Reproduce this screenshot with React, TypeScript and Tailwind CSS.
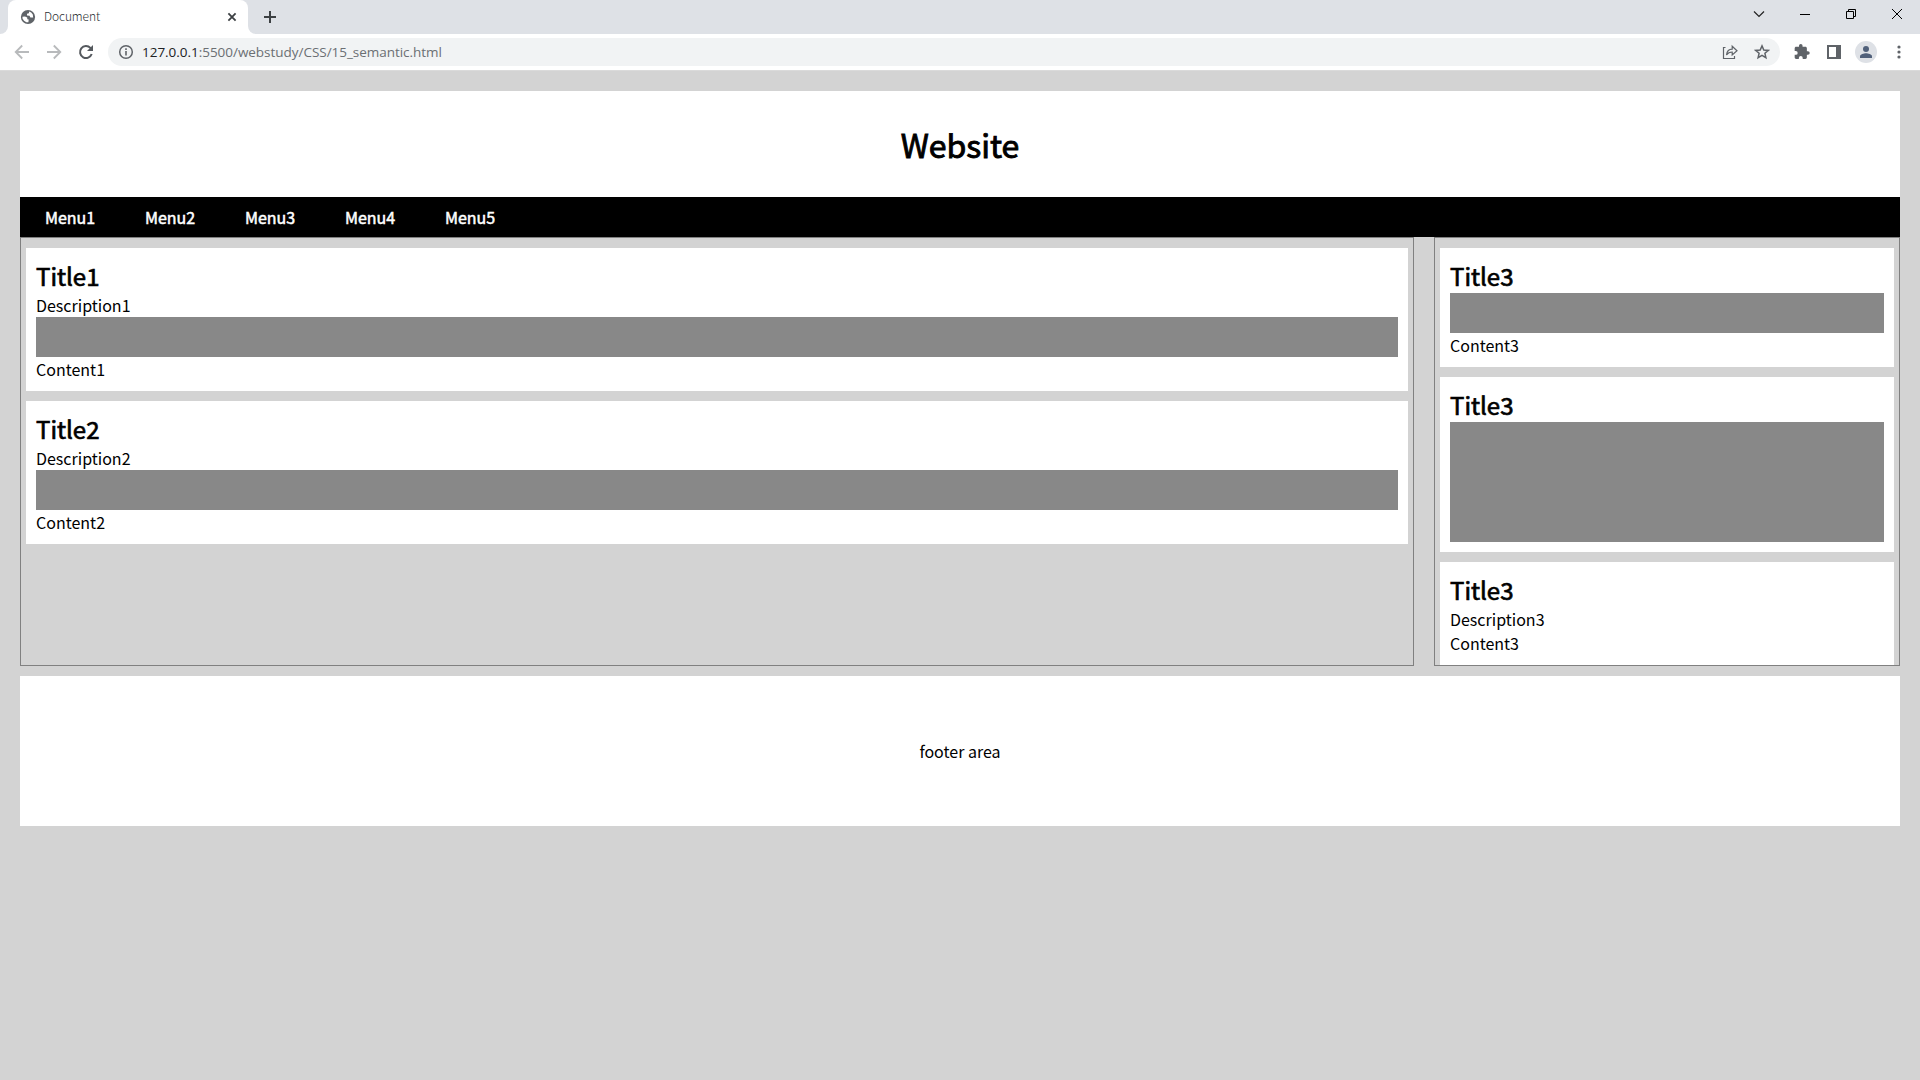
import type { ReactNode } from "react";

function TabStrip() {
  return (
    <div className="flex h-[34px] items-end justify-between bg-[#dee1e6]">
      <div className="flex h-full items-end">
        <div className="h-2 w-2 bg-white">
          <div className="h-2 w-2 rounded-br-lg bg-[#dee1e6]" />
        </div>
        <div className="flex h-full w-[240px] items-center rounded-t-lg bg-white pl-[12px] pr-[8px]">
          <svg width="16" height="16" viewBox="0 0 16 16" className="shrink-0">
            <circle cx="8" cy="8" r="7.1" fill="#5f6368" />
            <path d="M2.5 7.7 5 7.6 7.2 8.5 7.3 10.2 8.7 10.4 8.4 13.2 6.4 13.2 4 11.7 2.5 9.6Z" fill="#fff" />
            <path d="M9.1 2.6 8.9 4.2 7 4.8 7 6.4 9.5 6.8 10.4 8.4 12.2 8.6 13.2 8.4 12.8 5.4 11.2 3.5Z" fill="#fff" />
          </svg>
          <span className="mb-[2px] ml-[8px] flex-1 font-['Noto_Sans_CJK_KR',sans-serif] text-[12px] font-light tracking-[-0.1px] text-[#2c3034]">Document</span>
          <svg width="16" height="16" viewBox="0 0 16 16">
            <path d="m4.4 4.4 7.2 7.2M11.6 4.4l-7.2 7.2" stroke="#3c4043" strokeWidth="1.8" />
          </svg>
        </div>
        <div className="h-2 w-2 bg-white">
          <div className="h-2 w-2 rounded-bl-lg bg-[#dee1e6]" />
        </div>
        <svg width="12" height="12" viewBox="0 0 12 12" className="mb-[11px] ml-[8px]">
          <path d="M6 0v12M0 6h12" stroke="#3c4043" strokeWidth="2" />
        </svg>
      </div>
      <div className="flex h-[28px] w-[184px] items-center">
        <div className="flex w-[46px] justify-center">
          <svg width="12" height="12" viewBox="0 0 12 12" className="mb-[12px]"><path d="m1 3.5 5 5 5-5" fill="none" stroke="#222" strokeWidth="1.2" /></svg>
        </div>
        <div className="flex w-[46px] justify-center">
          <svg width="10" height="10" viewBox="0 0 10 10" className="mb-[12px]"><path d="M0 5.5h10" stroke="#000" /></svg>
        </div>
        <div className="flex w-[46px] justify-center">
          <svg width="10" height="10" viewBox="0 0 10 10" className="mb-[12px]"><path d="M.5 2.5h7v7h-7zM2.5 2.5v-2h7v7h-2" fill="none" stroke="#000" /></svg>
        </div>
        <div className="flex w-[46px] justify-center">
          <svg width="10" height="10" viewBox="0 0 10 10" className="mb-[12px]"><path d="m0 0 10 10M10 0 0 10" stroke="#000" /></svg>
        </div>
      </div>
    </div>
  );
}

function Toolbar() {
  return (
    <div className="flex h-[36px] items-center bg-white">
      <div className="flex w-[108px] items-center pl-[14px]">
        <svg width="16" height="16" viewBox="0 0 16 16"><path d="M15 8H2M8.2 1.5 1.7 8l6.5 6.5" fill="none" stroke="#b8babc" strokeWidth="1.8" /></svg>
        <svg width="16" height="16" viewBox="0 0 16 16" className="ml-[16px]"><path d="M1 8h13M7.8 1.5 14.3 8l-6.5 6.5" fill="none" stroke="#b8babc" strokeWidth="1.8" /></svg>
        <svg width="16" height="16" viewBox="0 0 16 16" className="ml-[16px]"><path d="M13.7 10A6 6 0 1 1 12.4 3.9L14 5.5" fill="none" stroke="#55595e" strokeWidth="2" /><path d="M15 1v6H9Z" fill="#55595e" /></svg>
      </div>
      <div className="flex h-[28px] w-[1672px] items-center rounded-full bg-[#f1f3f4] px-[10px]">
        <svg width="16" height="16" viewBox="0 0 16 16"><circle cx="8" cy="8" r="6.3" fill="none" stroke="#5f6368" strokeWidth="1.5" /><path d="M8 7v4.5M8 4.3V6" stroke="#5f6368" strokeWidth="1.6" /></svg>
        <span className="ml-[8px] flex-1 whitespace-pre font-['Open_Sans',sans-serif] text-[13.5px] tracking-[-0.03px] text-[#6b6f73]">
          <span className="text-[#202124]">127.0.0.1</span>:5500/webstudy/CSS/15_semantic.html
        </span>
        <svg width="16" height="16" viewBox="0 0 16 16"><path d="M3.500 3.500h-2v11h11V12" fill="none" stroke="#5f6368" strokeWidth="1.200" /><path d="M4.500 11C5 7 7 5.200 10.200 5.200V2.200L15 6.700l-4.800 4.200V8C7.500 8 5.800 9 4.500 11Z" fill="none" stroke="#5f6368" strokeWidth="1.200" /></svg>
        <svg width="16" height="16" viewBox="0 0 16 16" className="ml-[16px]"><path d="m8 1.900 1.800 4.100 4.500.4-3.400 2.900 1 4.400L8 11.400l-3.900 2.300 1-4.400-3.400-2.900 4.500-.4Z" fill="none" stroke="#5f6368" strokeWidth="1.500" /></svg>
      </div>
      <div className="flex h-full flex-1 items-center">
        <svg width="20" height="20" viewBox="0 0 24 24" className="ml-[12px]" fill="#5f6368"><path d="M20.500 11H19V7c0-1.100-.9-2-2-2h-4V3.500a2.500 2.500 0 0 0-5 0V5H4c-1.100 0-2 .9-2 2v3.800h1.500a2.700 2.700 0 0 1 0 5.400H2V20c0 1.100.9 2 2 2h3.800v-1.500a2.700 2.700 0 0 1 5.400 0V22H17c1.100 0 2-.9 2-2v-4h1.500a2.500 2.500 0 0 0 0-5Z" transform="translate(1.500 1.500) scale(.86)" /></svg>
        <svg width="14" height="14" viewBox="0 0 14 14" className="ml-[15px]"><path d="M0 0h14v14H0ZM2 2v10h7V2Z" fill="#5f6368" fillRule="evenodd" /></svg>
        <div className="ml-[14px] flex h-[22px] w-[22px] items-center justify-center rounded-full bg-[#dee1e6]">
          <svg width="12" height="12" viewBox="0 0 12 12" fill="#50607a"><circle cx="6" cy="3" r="3" /><path d="M0 12v-1.700C0 8.200 4 7.200 6 7.200s6 1 6 3.100V12Z" /></svg>
        </div>
        <svg width="4" height="14" viewBox="0 0 4 14" className="ml-[19.5px]" fill="#5f6368"><circle cx="2" cy="2" r="1.600" /><circle cx="2" cy="7" r="1.600" /><circle cx="2" cy="12" r="1.600" /></svg>
      </div>
    </div>
  );
}

function Card({ title, children }: { title: string; children: ReactNode }) {
  return (
    <article className="shrink-0 bg-white p-[10px]">
      <h2 className="h-[35px] text-[24px] leading-[36px] [-webkit-text-stroke:0.7px_black]">{title}</h2>
      {children}
    </article>
  );
}

const menus = ["Menu1", "Menu2", "Menu3", "Menu4", "Menu5"];

export default function App() {
  return (
    <div className="h-[1080px] overflow-hidden bg-[#d3d3d3] font-['Noto_Sans_CJK_KR',sans-serif] text-[16px] leading-[24px] text-black">
      <TabStrip />
      <Toolbar />
      <div className="h-px bg-[#dadada]" />
      <div className="px-[20px] pt-[20px]">
        <header className="flex h-[106px] items-center justify-center bg-white">
          <h1 className="text-[32px] leading-[48px] [-webkit-text-stroke:0.9px_black]">Website</h1>
        </header>
        <nav className="flex h-[40px] items-center bg-black text-white [-webkit-text-stroke:0.5px_white]">
          {menus.map((m) => (
            <a key={m} className="w-[100px] text-center">{m}</a>
          ))}
        </nav>
        <div className="flex h-[429px] justify-between">
          <section className="flex w-[1394px] flex-col gap-[10px] overflow-hidden border border-[#808080] px-[5px] pt-[10px]">
            {["1", "2"].map((n) => (
              <Card key={n} title={`Title${n}`}>
                <p>Description{n}</p>
                <div className="h-[40px] bg-[#888888]" />
                <p>Content{n}</p>
              </Card>
            ))}
          </section>
          <aside className="flex w-[466px] flex-col gap-[10px] overflow-hidden border border-[#808080] px-[5px] pt-[10px]">
            <Card title="Title3">
              <div className="h-[40px] bg-[#888888]" />
              <p>Content3</p>
            </Card>
            <Card title="Title3">
              <div className="h-[120px] bg-[#888888]" />
            </Card>
            <Card title="Title3">
              <p>Description3</p>
              <p>Content3</p>
            </Card>
          </aside>
        </div>
        <footer className="mt-[10px] flex h-[150px] items-center justify-center bg-white">footer area</footer>
      </div>
    </div>
  );
}
